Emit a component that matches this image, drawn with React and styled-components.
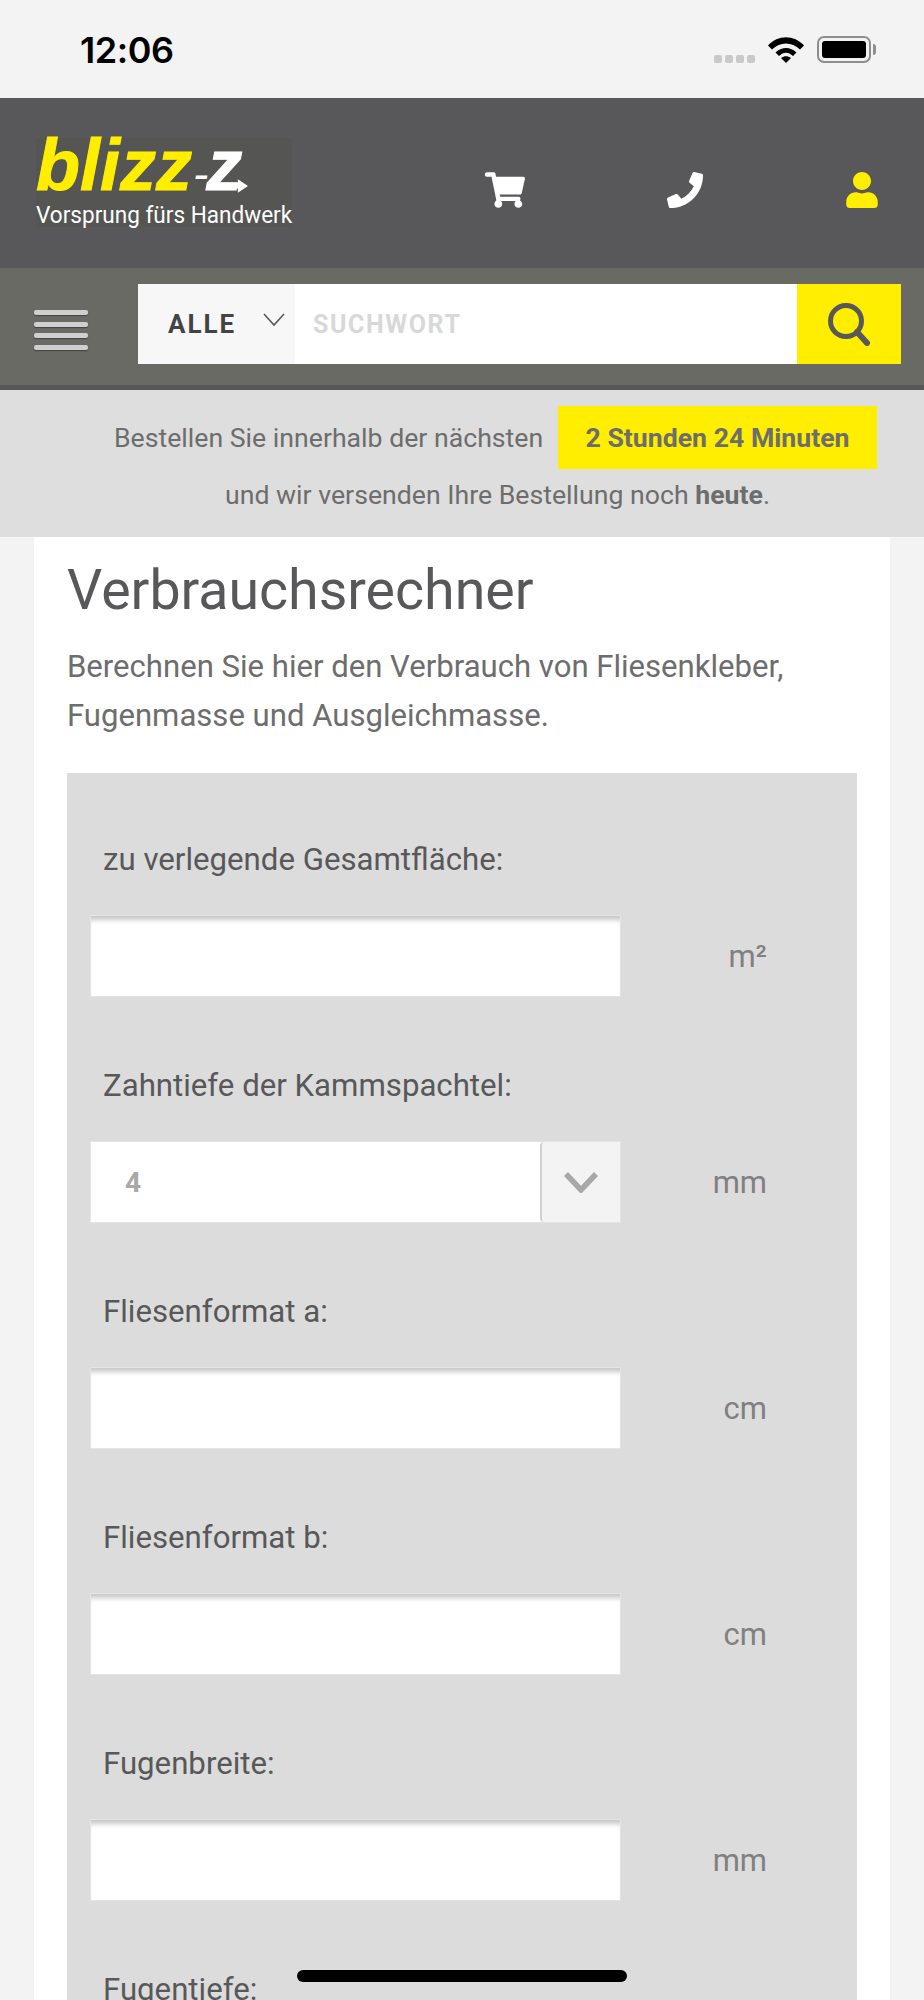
import React from "react";
import styled, { createGlobalStyle } from "styled-components";
import { FaShoppingCart, FaPhone, FaUser } from "react-icons/fa";

const FIELDS = [
  { label: "zu verlegende Gesamtfläche:", unit: "m²" },
  { label: "Zahntiefe der Kammspachtel:", unit: "mm", select: "4" },
  { label: "Fliesenformat a:", unit: "cm" },
  { label: "Fliesenformat b:", unit: "cm" },
  { label: "Fugenbreite:", unit: "mm" },
  { label: "Fugentiefe:", unit: "mm" },
];

export default function App() {
  return (
    <Page>
      <GlobalStyle />
      <StatusBar>
        <Time>12:06</Time>
        <StatusIcons>
          <Signal>
            <i />
            <i />
            <i />
            <i />
          </Signal>
          <svg width="36" height="27" viewBox="0 0 36 27">
            <path d="M0 9.5C10 -1.5 26 -1.5 36 9.5L32 13.5C24 5.5 12 5.5 4 13.5Z" fill="#000" />
            <path d="M7.5 16.5C13.5 10.5 22.5 10.5 28.5 16.5L25 20C20.5 15.5 15.5 15.5 11 20Z" fill="#000" />
            <path d="M13 22C16 19.5 20 19.5 23 22L18 27Z" fill="#000" />
          </svg>
          <Battery>
            <BatteryFill />
          </Battery>
        </StatusIcons>
      </StatusBar>

      <Header>
        <Logo>
          <LogoMark>
            blizz
            <LogoDash>-</LogoDash>
            <LogoZ>z</LogoZ>
            <LogoArrow viewBox="0 0 26 16">
              <path d="M0 5H14V0L26 8L14 16V11H0Z" fill="#fff" />
            </LogoArrow>
          </LogoMark>
          <Tagline>Vorsprung fürs Handwerk</Tagline>
        </Logo>
        <HeaderIcons>
          <FaShoppingCart size={40} color="#fff" />
          <FaPhone size={36} color="#fff" />
          <FaUser size={36} color="#ffee00" />
        </HeaderIcons>
      </Header>

      <SearchRow>
        <Burger>
          <span />
          <span />
          <span />
          <span />
        </Burger>
        <SearchBar>
          <Category>
            <CategoryLabel>ALLE</CategoryLabel>
            <svg width="22" height="16" viewBox="0 0 22 16">
              <path d="M1 2L11 13L21 2" fill="none" stroke="#58585a" strokeWidth="1.6" />
            </svg>
          </Category>
          <SearchInput placeholder="SUCHWORT" />
          <SearchButton>
            <svg width="44" height="44" viewBox="0 0 44 44">
              <circle cx="19" cy="19" r="15.5" fill="none" stroke="#58585a" strokeWidth="5" />
              <path d="M30 30L40 41" stroke="#58585a" strokeWidth="6" strokeLinecap="round" />
            </svg>
          </SearchButton>
        </SearchBar>
      </SearchRow>

      <Banner>
        <BannerLine>
          Bestellen Sie innerhalb der nächsten
          <Countdown>2 Stunden 24 Minuten</Countdown>
        </BannerLine>
        <BannerNote>
          und wir versenden Ihre Bestellung noch <strong>heute</strong>.
        </BannerNote>
      </Banner>

      <Content>
        <Title>Verbrauchsrechner</Title>
        <Intro>
          Berechnen Sie hier den Verbrauch von Fliesenkleber,
          <br />
          Fugenmasse und Ausgleichmasse.
        </Intro>
        <Panel>
          {FIELDS.map((field) => (
            <Field key={field.label}>
              <FieldLabel>{field.label}</FieldLabel>
              <FieldRow>
                {field.select ? (
                  <SelectBox>
                    <SelectValue>{field.select}</SelectValue>
                    <SelectArrow>
                      <svg width="36" height="22" viewBox="0 0 36 22">
                        <path d="M3 3L18 19L33 3" fill="none" stroke="#a8a8a8" strokeWidth="5.5" />
                      </svg>
                    </SelectArrow>
                  </SelectBox>
                ) : (
                  <TextInput type="text" />
                )}
                <Unit>{field.unit}</Unit>
              </FieldRow>
            </Field>
          ))}
        </Panel>
      </Content>

      <HomeIndicator />
    </Page>
  );
}

const GlobalStyle = createGlobalStyle`
  html, body {
    margin: 0;
    padding: 0;
    background: #f3f3f3;
  }
  * {
    box-sizing: border-box;
  }
`;

const Page = styled.div`
  position: relative;
  width: 924px;
  height: 2000px;
  overflow: hidden;
  background: #f3f3f3;
  font-family: Roboto, "Liberation Sans", sans-serif;
  color: #6d6d6d;
`;

const StatusBar = styled.div`
  height: 98px;
  padding: 0 53px 0 80px;
  display: flex;
  align-items: center;
  justify-content: space-between;
`;

const Time = styled.div`
  font-family: Inter, "Liberation Sans", sans-serif;
  font-size: 36px;
  font-weight: 600;
  color: #000;
  letter-spacing: -0.5px;
  margin-top: 2px;
`;

const StatusIcons = styled.div`
  display: flex;
  align-items: center;
  gap: 13px;
`;

const Signal = styled.div`
  display: flex;
  gap: 3px;
  margin-top: 19px;

  i {
    width: 8px;
    height: 8px;
    border-radius: 2px;
    background: #c9c9c9;
  }
`;

const Battery = styled.div`
  position: relative;
  width: 54px;
  height: 27px;
  padding: 3px;
  border: 2px solid #8e8e8e;
  border-radius: 7px;

  &::after {
    content: "";
    position: absolute;
    top: 6px;
    right: -7px;
    width: 3px;
    height: 11px;
    background: #8e8e8e;
    border-radius: 0 3px 3px 0;
  }
`;

const BatteryFill = styled.div`
  height: 100%;
  background: #000;
  border-radius: 3px;
`;

const Header = styled.div`
  height: 170px;
  background: #58585a;
  display: flex;
  align-items: flex-start;
  padding: 40px 0 0 36px;
`;

const Logo = styled.div`
  width: 256px;
  height: 89px;
  background: #555553;
`;

const LogoMark = styled.div`
  position: relative;
  height: 54px;
  font-family: "Liberation Sans", sans-serif;
  font-style: italic;
  font-weight: 700;
  font-size: 72px;
  line-height: 54px;
  letter-spacing: 0;
  color: #ffee00;
  white-space: nowrap;
  -webkit-text-stroke: 1px currentColor;
`;

const LogoDash = styled.span`
  color: #fff;
  font-size: 46px;
  font-weight: 400;
  margin-left: 1px;
  -webkit-text-stroke: 0;
`;

const LogoZ = styled.span`
  color: #fff;
  margin-left: -2px;
`;

const LogoArrow = styled.svg`
  position: absolute;
  left: 190px;
  top: 41px;
  width: 22px;
  height: 14px;
`;

const Tagline = styled.div`
  margin-top: 9px;
  font-size: 24px;
  line-height: 28px;
  color: #fff;
  white-space: nowrap;
  transform: scaleX(0.94);
  transform-origin: left center;
`;

const HeaderIcons = styled.div`
  flex: 1;
  display: flex;
  align-items: center;
  justify-content: space-between;
  padding: 32px 44px 0 193px;
`;

const SearchRow = styled.div`
  height: 122px;
  padding: 16px 23px 21px 34px;
  display: flex;
  align-items: flex-start;
  background: #696a64;
  border-bottom: 5px solid #58585a;
`;

const Burger = styled.div`
  width: 54px;
  margin: 26px 50px 0 0;
  display: flex;
  flex-direction: column;
  gap: 6.5px;

  span {
    height: 5px;
    border-radius: 2px;
    background: #cfcfcf;
    box-shadow: 0 1px 1px #44443f;
  }
`;

const SearchBar = styled.div`
  flex: 1;
  height: 80px;
  display: flex;
  background: #fff;
`;

const Category = styled.div`
  width: 157px;
  padding: 0 10px 0 30px;
  display: flex;
  align-items: center;
  justify-content: space-between;
  background: #f7f7f8;

  svg {
    margin-top: -8px;
  }
`;

const CategoryLabel = styled.span`
  font-size: 26px;
  font-weight: 700;
  letter-spacing: 2px;
  color: #434345;
`;

const SearchInput = styled.input`
  flex: 1;
  min-width: 0;
  padding: 0 18px;
  border: 0;
  outline: 0;
  background: #fff;
  font-family: Roboto, sans-serif;
  font-size: 25px;
  font-weight: 700;
  letter-spacing: 1.6px;

  &::placeholder {
    color: #d8d8d8;
    opacity: 1;
  }
`;

const SearchButton = styled.div`
  width: 104px;
  display: flex;
  align-items: center;
  justify-content: center;
  background: #ffee00;
`;

const Banner = styled.div`
  height: 147px;
  padding: 16px 47px 0 114px;
  background: #dedede;
  font-size: 26.67px;
`;

const BannerLine = styled.div`
  display: flex;
  align-items: center;
  justify-content: space-between;
  height: 63px;
`;

const Countdown = styled.span`
  width: 319px;
  height: 63px;
  display: flex;
  align-items: center;
  justify-content: center;
  background: #ffee00;
  font-weight: 700;
  color: #6d6d6d;
`;

const BannerNote = styled.div`
  margin-top: 8px;
  padding-left: 111px;
  line-height: 36px;

  strong {
    font-weight: 700;
  }
`;

const Content = styled.div`
  width: 856px;
  margin: 0 34px;
  padding: 20px 33px 0;
  background: #fff;
`;

const Title = styled.h1`
  margin: 0;
  font-size: 55.5px;
  font-weight: 400;
  line-height: 68px;
  color: #58585a;
`;

const Intro = styled.p`
  margin: 17px 0 0;
  font-size: 31.1px;
  line-height: 49px;
  color: #6d6d6d;
`;

const Panel = styled.div`
  margin-top: 33px;
  padding: 67px 90px 0 24px;
  background: #dcdcdc;
`;

const Field = styled.div`
  margin-bottom: 70px;
`;

const FieldLabel = styled.div`
  padding-left: 12px;
  font-size: 31.2px;
  line-height: 40px;
  color: #58585a;
`;

const FieldRow = styled.div`
  margin-top: 36px;
  display: flex;
  align-items: center;
  justify-content: space-between;
`;

const TextInput = styled.input`
  display: block;
  width: 529px;
  height: 80px;
  padding: 0 30px;
  border: 0;
  border-radius: 0;
  outline: 0;
  background: #fff;
  box-shadow: inset 0 7px 5px -3px #c8c8c8, 0 0 0 1px #e4e4e4;
`;

const SelectBox = styled.div`
  width: 529px;
  height: 80px;
  display: flex;
  align-items: center;
  background: #fff;
  box-shadow: 0 0 0 1px #e4e4e4;
`;

const SelectValue = styled.span`
  flex: 1;
  padding-left: 34px;
  font-size: 28px;
  font-weight: 700;
  color: #a8a8a8;
`;

const SelectArrow = styled.div`
  width: 80px;
  height: 100%;
  display: flex;
  align-items: center;
  justify-content: center;
  background: #f3f3f3;
  border-left: 2px solid #d0d0d0;
  border-radius: 4px 0 0 4px;
`;

const Unit = styled.span`
  font-size: 31px;
  color: #808080;
`;

const HomeIndicator = styled.div`
  position: absolute;
  left: 297px;
  top: 1970px;
  width: 330px;
  height: 12px;
  border-radius: 6px;
  background: #000;
`;
